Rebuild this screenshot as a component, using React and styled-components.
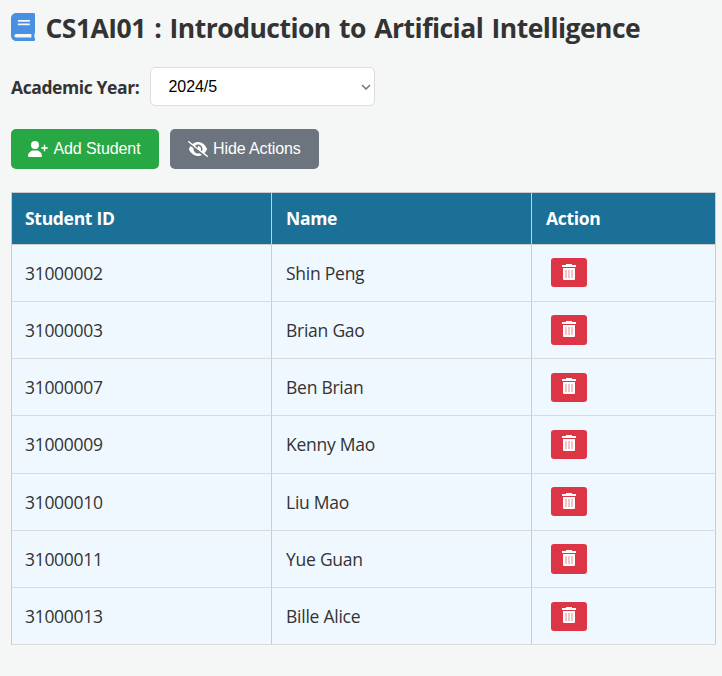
import React, { useState } from "react";
import styled, { createGlobalStyle } from "styled-components";
import { FaBook } from "react-icons/fa";
import { FaUserPlus, FaEyeSlash } from "react-icons/fa6";

const GlobalStyle = createGlobalStyle`
  * { box-sizing: border-box; }
  body {
    margin: 0;
    background: #f4f7f6;
    color: #333;
    font-family: "Segoe UI", "Open Sans", "Noto Sans", sans-serif;
  }
`;

const Page = styled.main`
  width: 722px;
  height: 676px;
  padding: 8px 6px 0 11px;
  overflow: hidden;
`;

const Title = styled.h1`
  display: flex;
  align-items: center;
  gap: 11px;
  height: 40px;
  margin: 0 0 0 -0.5px;
  font-size: 26.5px;
  font-weight: 700;
  white-space: nowrap;
  letter-spacing: -0.52px;
  word-spacing: 2px;

  svg {
    width: 24px;
    height: 28px;
    margin-top: -2px;
    color: #4a90e2;
  }
`;

const Filter = styled.div`
  display: flex;
  align-items: center;
  height: 39px;
  margin-top: 19px;
`;

const FilterLabel = styled.label`
  width: 139px;
  font-size: 17.5px;
  font-weight: 700;
  letter-spacing: -0.4px;
  white-space: nowrap;
`;

const SelectFrame = styled.div`
  display: grid;
  align-items: center;
  width: 225px;
  height: 39px;

  > * { grid-area: 1 / 1; }

  svg {
    justify-self: end;
    margin-right: 4px;
    pointer-events: none;
  }
`;

const YearSelect = styled.select`
  width: 100%;
  height: 100%;
  padding: 0 17.5px;
  appearance: none;
  border: 1px solid #ddd;
  border-radius: 5px;
  background: #fff;
  color: #000;
  font: 16px "Liberation Sans", Arial, sans-serif;
  letter-spacing: -0.08px;
`;

const Toolbar = styled.div`
  display: flex;
  gap: 11px;
  margin-top: 23px;
`;

const ToolButton = styled.button`
  display: flex;
  align-items: center;
  width: ${(p) => p.$width}px;
  height: 40px;
  padding: 0 0 1px ${(p) => p.$inset}px;
  gap: ${(p) => p.$gap}px;
  border: 0;
  border-radius: 5px;
  background: ${(p) => p.$color};
  color: #fff;
  font: 16px "Liberation Sans", Arial, sans-serif;
  letter-spacing: -0.1px;
  white-space: nowrap;

  svg { width: 20px; height: 16px; flex: none; }
`;

const Table = styled.table`
  width: 705px;
  margin-top: 23px;
  table-layout: fixed;
  border-collapse: separate;
  border-spacing: 0;
`;

const HeadCell = styled.th`
  width: ${(p) => p.$width}px;
  height: 53px;
  padding: 0 14px 2px;
  border: 1px solid #ccc;
  border-left-width: 0;
  background: #1b7097;
  color: #fff;
  font-size: 17.5px;
  font-weight: 700;
  letter-spacing: -0.3px;
  text-align: left;

  &:first-child { border-left-width: 1px; padding-left: 13px; }
`;

const Cell = styled.td`
  height: ${(p) => p.$height}px;
  padding: 0 14px 1px;
  border: 1px solid #ccc;
  border-bottom-color: #d8dadd;
  border-width: 0 1px 1px 0;
  background: #f0f8ff;
  font-size: 17.5px;
  letter-spacing: ${(p) => p.$tracking || 0}px;

  &:first-child { border-left-width: 1px; padding-left: 13px; }
`;

const ActionCell = styled(Cell)`
  padding: ${(p) => p.$top}px 0 0 19px;
  vertical-align: top;
`;

const DeleteButton = styled.button`
  display: flex;
  justify-content: center;
  width: 36px;
  height: ${(p) => p.$height}px;
  padding: ${(p) => p.$iconTop}px 0 0;
  border: 0;
  border-radius: 3px;
  background: #dc3545;
  color: #fff;
`;

function TrashIcon() {
  return (
    <svg width="14" height="16" viewBox="0 0 14 16">
      <path fill="currentColor" d="M0 1h4V0h6v1h4v2H0z" />
      <path fill="currentColor" d="M1 4h12v11q0 1-1 1H2q-1 0-1-1z" />
      <path stroke="#dc3545" strokeOpacity=".38" strokeWidth="1.6" d="M4 6v8M7 6v8M10 6v8" />
    </svg>
  );
}

const students = [
  { id: "31000002", name: "Shin Peng", height: 57, top: 13, button: 29 },
  { id: "31000003", name: "Brian Gao", height: 57, top: 13, button: 30 },
  { id: "31000007", name: "Ben Brian", height: 57, top: 14, button: 29 },
  { id: "31000009", name: "Kenny Mao", height: 58, top: 14, button: 29 },
  { id: "31000010", name: "Liu Mao", height: 57, top: 13, button: 29 },
  { id: "31000011", name: "Yue Guan", height: 57, top: 13, button: 30 },
  { id: "31000013", name: "Bille Alice", height: 57, top: 14, button: 29 },
];

export default function App() {
  const [year, setYear] = useState("2024/5");
  return (
    <>
      <GlobalStyle />
      <Page>
        <Title>
          <FaBook preserveAspectRatio="none" />
          <span>CS1AI01 : Introduction to Artificial Intelligence</span>
        </Title>
        <Filter>
          <FilterLabel htmlFor="year">Academic Year:</FilterLabel>
          <SelectFrame>
            <YearSelect id="year" value={year} onChange={(e) => setYear(e.target.value)}>
              <option>2024/5</option>
            </YearSelect>
            <svg width="10" height="6" viewBox="0 0 10 6" fill="none" stroke="#757575" strokeWidth="1.5">
              <path d="M1 1l4 4 4-4" />
            </svg>
          </SelectFrame>
        </Filter>
        <Toolbar>
          <ToolButton $color="#28a745" $width={148} $inset={17} $gap={5.5}>
            <FaUserPlus />
            Add Student
          </ToolButton>
          <ToolButton $color="#6c757d" $width={149} $inset={18} $gap={5}>
            <FaEyeSlash />
            Hide Actions
          </ToolButton>
        </Toolbar>
        <Table>
          <thead>
            <tr>
              <HeadCell $width={261}>Student ID</HeadCell>
              <HeadCell $width={260}>Name</HeadCell>
              <HeadCell $width={184}>Action</HeadCell>
            </tr>
          </thead>
          <tbody>
            {students.map((s) => (
              <tr key={s.id}>
                <Cell $height={s.height} $tracking={-0.3}>{s.id}</Cell>
                <Cell $height={s.height} $tracking={-0.25}>{s.name}</Cell>
                <ActionCell $height={s.height} $top={s.top}>
                  <DeleteButton $height={s.button} $iconTop={19 - s.top} aria-label={`Delete ${s.name}`}>
                    <TrashIcon />
                  </DeleteButton>
                </ActionCell>
              </tr>
            ))}
          </tbody>
        </Table>
      </Page>
    </>
  );
}
